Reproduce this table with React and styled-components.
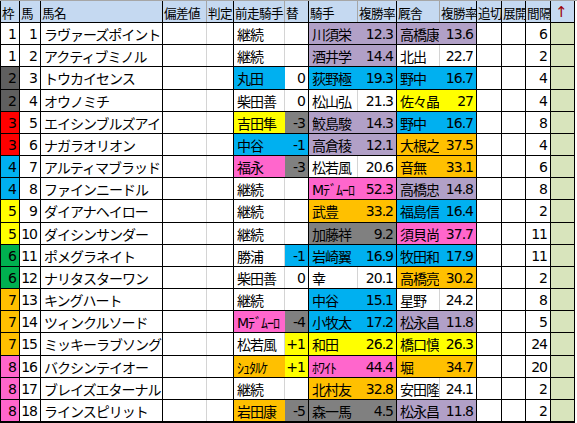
import React from "react";
import styled, { createGlobalStyle } from "styled-components";

const GlobalStyle = createGlobalStyle`
  html, body {
    margin: 0;
    padding: 0;
    background: #ffffff;
  }
  body {
    font-family: "DejaVu Sans", "Noto Sans CJK JP", sans-serif;
  }
`;

//column widths, right border kind
const COLS = [19, 21, 122, 44, 27, 51, 24, 49, 39, 43, 37, 25, 24, 25, 24];
const SOFT = [3, 5, 7, 9];
const TEMPLATE = COLS.map((w) => `${w}px`).join(" ");

const FILL = {
  P: "#b1a0c7",
  C: "#00b0f0",
  Y: "#ffff00",
  O: "#ffc000",
  K: "#ff66cc",
  G: "#808080",
};

const WAKU = {
  1: "#ffffff",
  2: "#5f5f5f",
  3: "#ff0000",
  4: "#00b0f0",
  5: "#ffff00",
  6: "#00b050",
  7: "#ffc000",
  8: "#ff66cc",
};

const Sheet = styled.div`
  width: 577px;
  height: 423px;
  display: flex;
  flex-direction: column;
  border-top: 1px solid #a6a6a6;
  box-sizing: border-box;
  font-size: 14px;
  letter-spacing: -1px;
  color: #000;
`;

const Row = styled.div`
  display: grid;
  grid-template-columns: ${TEMPLATE};
  border-left: 1px solid #000;
  border-bottom: ${(p) => (p.$last ? "2px" : "1px")} solid #000;
  width: 575px;
  box-sizing: border-box;
  height: ${(p) => (p.$head ? "22px" : "auto")};
  flex: ${(p) => (p.$head ? "none" : "1")};
`;

const Cell = styled.div`
  display: flex;
  align-items: center;
  justify-content: ${(p) => (p.$right ? "flex-end" : "flex-start")};
  padding: ${(p) => (p.$right ? "1px 3px 0 0" : "1px 0 0 3px")};
  background: ${(p) => p.$bg || "transparent"};
  border-right: 1px solid
    ${(p) => (p.$soft ? p.$bg || "#d4d4d4" : "#000")};
  white-space: nowrap;
  overflow: hidden;
  box-sizing: border-box;
  min-width: 0;
`;

const HeadCell = styled(Cell)`
  background: ${(p) => p.$bg || "#c5d9f1"};
  letter-spacing: -0.6px;
  font-size: 12.6px;
  padding: 1px 0 0 1px;
  border-right-color: ${(p) => (p.$soft ? "#a6a6a6" : "#000")};
`;

const Arrow = styled.span`
  color: #9c0006;
  font-size: 15px;
  padding-left: 3px;
`;

const ROWS = [
  [1, 1, "ラヴァーズポイント", "継続", "", "", "", "川須栄", "12.3", "P", "高橋康", "13.6", "P", "P", 6],
  [1, 2, "アクティブミノル", "継続", "", "", "", "酒井学", "14.4", "P", "北出", "22.7", "", "", 2],
  [2, 3, "トウカイセンス", "丸田", "C", "0", "", "荻野極", "19.3", "C", "野中", "16.7", "C", "C", 4],
  [2, 4, "オウノミチ", "柴田善", "", "0", "", "松山弘", "21.3", "", "佐々晶", "27", "Y", "Y", 4],
  [3, 5, "エイシンブルズアイ", "吉田隼", "Y", "-3", "G", "鮫島駿", "14.3", "P", "野中", "16.7", "C", "C", 8],
  [3, 6, "ナガラオリオン", "中谷", "C", "-1", "C", "高倉稜", "12.1", "P", "大根之", "37.5", "O", "O", 4],
  [4, 7, "アルティマブラッド", "福永", "K", "-3", "G", "松若風", "20.6", "", "音無", "33.1", "O", "O", 6],
  [4, 8, "ファインニードル", "継続", "", "", "", "Mﾃﾞﾑｰﾛ", "52.3", "K", "高橋忠", "14.8", "P", "P", 8],
  [5, 9, "ダイアナヘイロー", "継続", "", "", "", "武豊", "33.2", "O", "福島信", "16.4", "C", "C", 2],
  [5, 10, "ダイシンサンダー", "継続", "", "", "", "加藤祥", "9.2", "G", "須貝尚", "37.7", "K", "K", 11],
  [6, 11, "ポメグラネイト", "勝浦", "", "-1", "C", "岩崎翼", "16.9", "C", "牧田和", "17.9", "C", "C", 11],
  [6, 12, "ナリタスターワン", "柴田善", "", "0", "", "幸", "20.1", "", "高橋亮", "30.2", "O", "O", 2],
  [7, 13, "キングハート", "継続", "", "", "", "中谷", "15.1", "C", "星野", "24.2", "", "", 8],
  [7, 14, "ツィンクルソード", "Mﾃﾞﾑｰﾛ", "K", "-4", "G", "小牧太", "17.2", "C", "松永昌", "11.8", "P", "P", 5],
  [7, 15, "ミッキーラブソング", "松若風", "", "+1", "Y", "和田", "26.2", "Y", "橋口慎", "26.3", "Y", "Y", 24],
  [8, 16, "バクシンテイオー", "ｼｭﾀﾙｹ", "O", "+1", "Y", "ﾎﾜｲﾄ", "44.4", "K", "堀", "34.7", "O", "O", 20],
  [8, 17, "ブレイズエターナル", "継続", "", "", "", "北村友", "32.8", "O", "安田隆", "24.1", "", "", 2],
  [8, 18, "ラインスピリット", "岩田康", "O", "-5", "G", "森一馬", "4.5", "G", "松永昌", "11.8", "P", "P", 2],
];

function HeaderRow() {
  const labels = ["枠", "馬", "馬名", "偏差値", "判定", "前走騎手", "替", "騎手", "複勝率", "厩舎", "複勝率", "追切", "展開", "間隔"];
  return (
    <Row $head>
      {labels.map((t, i) => (
        <HeadCell key={i} $soft={SOFT.includes(i)}>
          {t}
        </HeadCell>
      ))}
      <HeadCell>
        <Arrow>↑</Arrow>
      </HeadCell>
    </Row>
  );
}

function HorseRow({ r, last }) {
  const [waku, no, name, prev, prevC, swap, swapC, jockey, jRate, jC, trainer, tRate, tC1, tC2, gap] = r;
  return (
    <Row $last={last}>
      <Cell $right $bg={WAKU[waku]}>{waku}</Cell>
      <Cell $right>{no}</Cell>
      <Cell>{name}</Cell>
      <Cell $soft />
      <Cell />
      <Cell $soft $bg={FILL[prevC]}>{prev}</Cell>
      <Cell $right $bg={FILL[swapC]}>{swap}</Cell>
      <Cell $soft $bg={FILL[jC]}>{jockey}</Cell>
      <Cell $right $bg={FILL[jC]}>{jRate}</Cell>
      <Cell $soft $bg={FILL[tC1]}>{trainer}</Cell>
      <Cell $right $bg={FILL[tC2]}>{tRate}</Cell>
      <Cell />
      <Cell />
      <Cell $right>{gap}</Cell>
      <Cell $bg="#d8e4bc" />
    </Row>
  );
}

export default function App() {
  return (
    <>
      <GlobalStyle />
      <Sheet>
        <HeaderRow />
        {ROWS.map((r, i) => (
          <HorseRow key={i} r={r} last={i === ROWS.length - 1} />
        ))}
      </Sheet>
    </>
  );
}
